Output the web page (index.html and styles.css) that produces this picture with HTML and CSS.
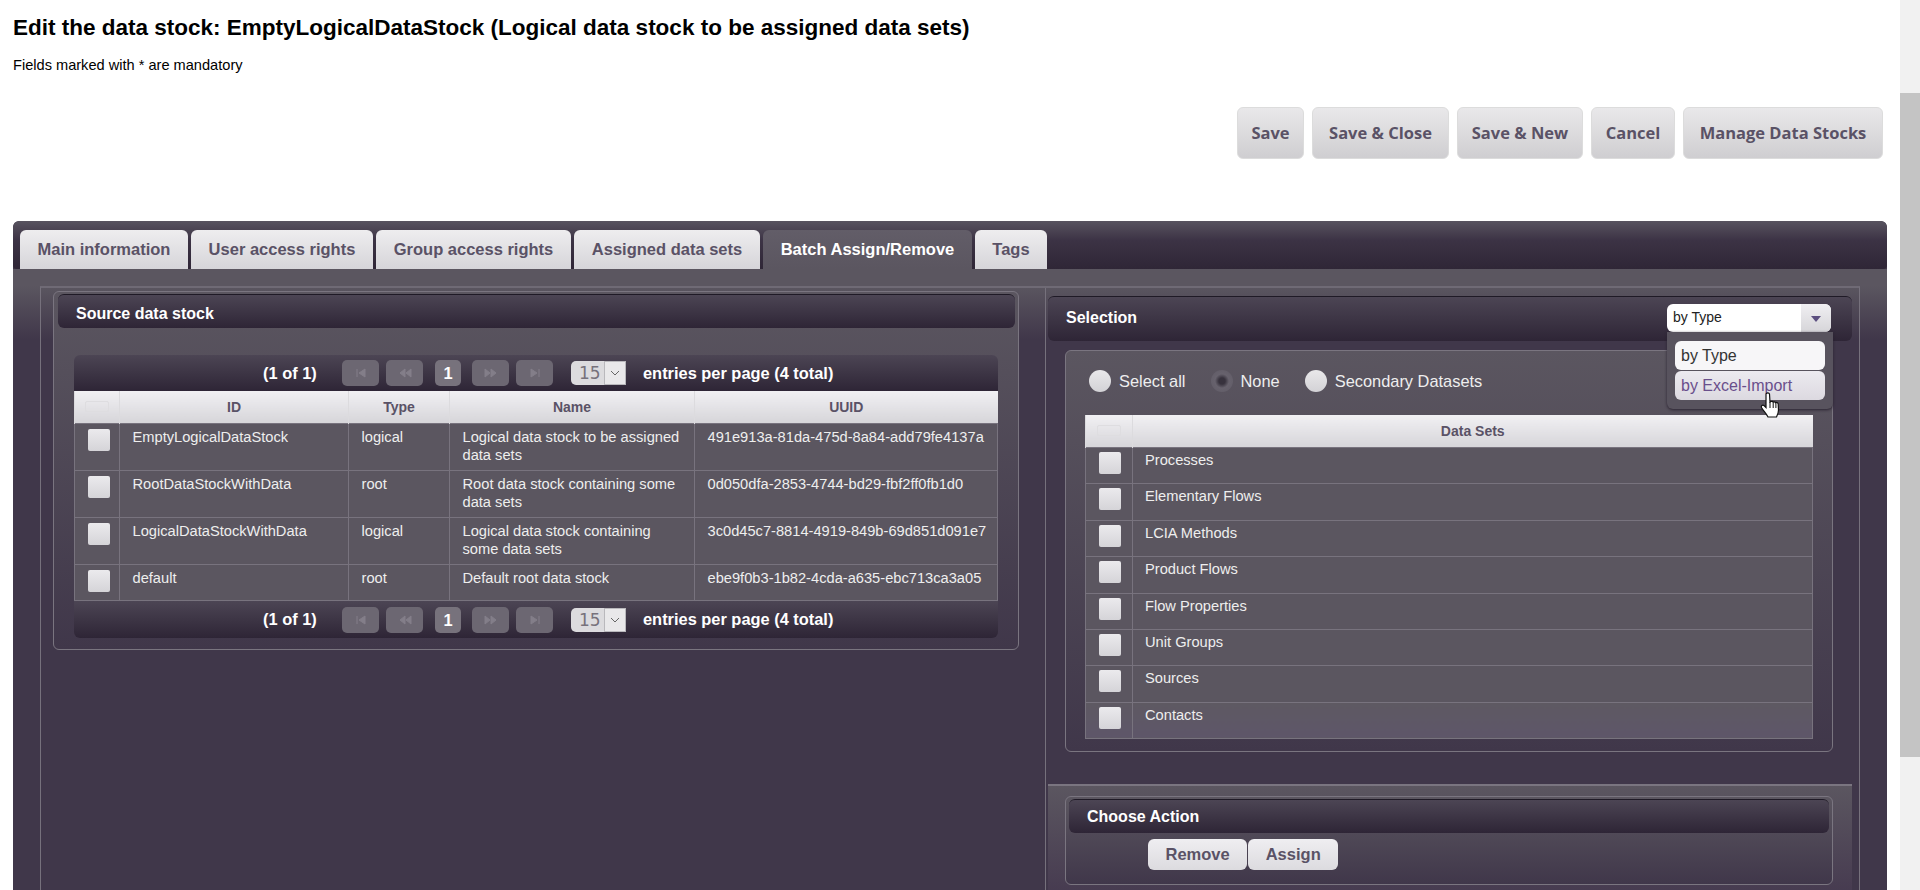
FILE: index.html
```html
<!DOCTYPE html>
<html lang="en">
<head>
    <meta charset="UTF-8">
    <title>Edit the data stock</title>
    <link rel="stylesheet" href="styles.css">
</head>
<body>
    <main class="page">
        <h1>Edit the data stock: EmptyLogicalDataStock (Logical data stock to be assigned data sets)</h1>
        <p class="note">Fields marked with * are mandatory</p>

        <div class="toolbar">
            <button class="btn b-save">Save</button>
            <button class="btn b-close">Save &amp; Close</button>
            <button class="btn b-new">Save &amp; New</button>
            <button class="btn b-cancel">Cancel</button>
            <button class="btn b-manage">Manage Data Stocks</button>
        </div>

        <section class="panel">
            <nav class="tabs">
                <a class="tab w1">Main information</a>
                <a class="tab w2">User access rights</a>
                <a class="tab w3">Group access rights</a>
                <a class="tab w4">Assigned data sets</a>
                <a class="tab w5 active">Batch Assign/Remove</a>
                <a class="tab w6">Tags</a>
            </nav>

            <div class="tab-body">
                <div class="columns">
                    <!-- Source data stock -->
                    <div class="col-left">
                        <div class="box source-box">
                            <div class="bar">Source data stock</div>
                            <div class="source-inner">
                                <div class="pager pager-top">
                                    <span class="pager-count">(1 of 1)</span>
                                    <span class="pg"><svg width="12" height="10" viewBox="0 0 12 10"><path d="M2 1v8M10 1v8L4 5z"/></svg></span>
                                    <span class="pg"><svg width="14" height="10" viewBox="0 0 14 10"><path d="M7 1v8L2 5zM13 1v8L8 5z"/></svg></span>
                                    <span class="pg-num">1</span>
                                    <span class="pg"><svg width="14" height="10" viewBox="0 0 14 10"><path d="M1 1v8l5-4zM7 1v8l5-4z"/></svg></span>
                                    <span class="pg"><svg width="12" height="10" viewBox="0 0 12 10"><path d="M2 1v8l6-4zM10 1v8"/></svg></span>
                                    <span class="per-page">15<i class="per-arrow"><svg width="10" height="6" viewBox="0 0 10 6"><path d="M1 1l4 4 4-4"/></svg></i></span>
                                    <span class="pager-total">entries per page (4 total)</span>
                                </div>
                                <table class="grid stocks">
                                    <thead>
                                        <tr>
                                            <th class="c-check"><span class="check-ghost"></span></th>
                                            <th class="c-id">ID</th>
                                            <th class="c-type">Type</th>
                                            <th class="c-name">Name</th>
                                            <th>UUID</th>
                                        </tr>
                                    </thead>
                                    <tbody>
                                        <tr>
                                            <td class="c-check"><span class="check"></span></td>
                                            <td>EmptyLogicalDataStock</td>
                                            <td>logical</td>
                                            <td>Logical data stock to be assigned data sets</td>
                                            <td>491e913a-81da-475d-8a84-add79fe4137a</td>
                                        </tr>
                                        <tr>
                                            <td class="c-check"><span class="check"></span></td>
                                            <td>RootDataStockWithData</td>
                                            <td>root</td>
                                            <td>Root data stock containing some data sets</td>
                                            <td>0d050dfa-2853-4744-bd29-fbf2ff0fb1d0</td>
                                        </tr>
                                        <tr>
                                            <td class="c-check"><span class="check"></span></td>
                                            <td>LogicalDataStockWithData</td>
                                            <td>logical</td>
                                            <td>Logical data stock containing some data sets</td>
                                            <td>3c0d45c7-8814-4919-849b-69d851d091e7</td>
                                        </tr>
                                        <tr class="short">
                                            <td class="c-check"><span class="check"></span></td>
                                            <td>default</td>
                                            <td>root</td>
                                            <td>Default root data stock</td>
                                            <td>ebe9f0b3-1b82-4cda-a635-ebc713ca3a05</td>
                                        </tr>
                                    </tbody>
                                </table>
                                <div class="pager pager-bottom">
                                    <span class="pager-count">(1 of 1)</span>
                                    <span class="pg"><svg width="12" height="10" viewBox="0 0 12 10"><path d="M2 1v8M10 1v8L4 5z"/></svg></span>
                                    <span class="pg"><svg width="14" height="10" viewBox="0 0 14 10"><path d="M7 1v8L2 5zM13 1v8L8 5z"/></svg></span>
                                    <span class="pg-num">1</span>
                                    <span class="pg"><svg width="14" height="10" viewBox="0 0 14 10"><path d="M1 1v8l5-4zM7 1v8l5-4z"/></svg></span>
                                    <span class="pg"><svg width="12" height="10" viewBox="0 0 12 10"><path d="M2 1v8l6-4zM10 1v8"/></svg></span>
                                    <span class="per-page">15<i class="per-arrow"><svg width="10" height="6" viewBox="0 0 10 6"><path d="M1 1l4 4 4-4"/></svg></i></span>
                                    <span class="pager-total">entries per page (4 total)</span>
                                </div>
                            </div>
                        </div>
                    </div>

                    <!-- Selection and action -->
                    <div class="col-right">
                        <div class="bar bar-selection">
                            <span>Selection</span>
                            <div class="combo">
                                <span class="combo-label">by Type</span>
                                <span class="combo-arrow"></span>
                                <div class="combo-menu">
                                    <div class="combo-item">by Type</div>
                                    <div class="combo-item hover">by Excel-Import</div>
                                    <svg class="hand" width="22" height="28" viewBox="0 0 22 28">
                                        <path d="M6 2c1-1.500 3-1.500 3.500 0l.5 8 1-.5c1-.5 2 0 2.200.5 1-.5 2 0 2.200.6 1-.4 2.600 0 2.800 1.400l.3 6c0 3-1 5-2 7H8c-1-2-5-7-6.500-9.500-.8-1.500 1-3 2.500-2l2 2z" fill="#fff" stroke="#111" stroke-width="1.200"/>
                                        <path d="M10 10v6M13.200 10v6M15.900 11v5" stroke="#111" stroke-width="1" fill="none"/>
                                    </svg>
                                </div>
                            </div>
                        </div>

                        <div class="box data-box">
                            <div class="radios">
                                <label class="radio-item"><span class="radio"></span>Select all</label>
                                <label class="radio-item"><span class="radio on"></span>None</label>
                                <label class="radio-item"><span class="radio"></span>Secondary Datasets</label>
                            </div>
                            <table class="grid sets">
                                <thead>
                                    <tr>
                                        <th class="c-check2"><span class="check-ghost"></span></th>
                                        <th>Data Sets</th>
                                    </tr>
                                </thead>
                                <tbody>
                                    <tr><td class="c-check2"><span class="check"></span></td><td>Processes</td></tr>
                                    <tr><td class="c-check2"><span class="check"></span></td><td>Elementary Flows</td></tr>
                                    <tr><td class="c-check2"><span class="check"></span></td><td>LCIA Methods</td></tr>
                                    <tr><td class="c-check2"><span class="check"></span></td><td>Product Flows</td></tr>
                                    <tr><td class="c-check2"><span class="check"></span></td><td>Flow Properties</td></tr>
                                    <tr><td class="c-check2"><span class="check"></span></td><td>Unit Groups</td></tr>
                                    <tr><td class="c-check2"><span class="check"></span></td><td>Sources</td></tr>
                                    <tr><td class="c-check2"><span class="check"></span></td><td>Contacts</td></tr>
                                </tbody>
                            </table>
                        </div>

                        <div class="action-area">
                            <div class="box action-box">
                                <div class="bar bar-action">Choose Action</div>
                                <div class="action-buttons">
                                    <button class="small-btn">Remove</button>
                                    <button class="small-btn">Assign</button>
                                </div>
                            </div>
                        </div>
                    </div>
                </div>
            </div>
        </section>
    </main>

    <div class="scrollbar">
        <div class="scroll-thumb"></div>
    </div>
</body>
</html>
```

FILE: styles.css
```css
html, body {
    margin: 0;
    height: 890px;
    overflow: hidden;
}
body {
    display: flex;
    background: #fff;
    font-family: "Liberation Sans", Arial, sans-serif;
    color: #000;
}
.page {
    flex: 1;
    min-width: 0;
    padding: 0 13px;
}
h1 {
    margin: 0;
    padding-top: 15px;
    font-size: 22.500px;
    line-height: 26px;
    font-weight: bold;
}
.note {
    margin: 15px 0 0;
    font-size: 14.600px;
    line-height: 18px;
}

/* Top buttons */
.toolbar {
    display: flex;
    justify-content: flex-end;
    gap: 8px;
    margin-top: 33px;
    padding-right: 4px;
}
.btn {
    height: 52px;
    padding: 0 0 2px;
    border: 1px solid #dcdcdc;
    border-radius: 6px;
    background: linear-gradient(#e9e8ea, #cfced1);
    font-family: "Open Sans", sans-serif;
    font-size: 16.500px;
    font-weight: bold;
    color: #5a5266;
}
.b-save { width: 67px; }
.b-close { width: 137px; }
.b-new { width: 126px; }
.b-cancel { width: 84px; }
.b-manage { width: 200px; }

/* Tab panel */
.panel {
    margin-top: 62px;
    height: 700px;
    border-radius: 6px 6px 0 0;
    background: #3f3648;
    overflow: hidden;
}
.tabs {
    display: flex;
    gap: 3px;
    height: 39px;
    padding: 9px 0 0 7px;
    border-radius: 6px 6px 4px 4px;
    background: linear-gradient(#58535f, #3c3345 40%, #2f2636);
}
.tab {
    box-sizing: border-box;
    height: 39px;
    text-align: center;
    border-radius: 6px 6px 0 0;
    background: linear-gradient(#eeedef, #d6d5d9);
    font-size: 16.500px;
    font-weight: bold;
    line-height: 39px;
    color: #5a5266;
}
.w1 { width: 168px; }
.w2 { width: 182px; }
.w3 { width: 195px; }
.w4 { width: 186px; }
.w5 { width: 209px; }
.w6 { width: 72px; }
.tab.active {
    background: linear-gradient(#625d68, #5b5660);
    color: #fff;
}
.tab-body {
    padding: 17px 27px 0;
    background: linear-gradient(#5b5660, #5b5660 17px, #40374a 70px);
}
.columns {
    display: flex;
    height: 640px;
    border-top: 2px solid #6f6a75;
    border-left: 1px solid #76717c;
    border-right: 1px solid #76717c;
}

/* Boxes and dark title bars */
.box {
    box-sizing: border-box;
    border: 1px solid #7a7580;
    border-radius: 6px;
    background: linear-gradient(#5b5660, #40374a);
}
.bar {
    box-sizing: border-box;
    border-top: 1px solid #1f1a26;
    border-radius: 6px;
    background: linear-gradient(#4c4554, #2e2536);
    font-size: 16px;
    font-weight: bold;
    color: #fff;
}

/* Left column */
.col-left {
    box-sizing: border-box;
    width: 1005px;
    padding: 3px 0 0 12px;
    border-right: 1px solid #76717c;
}
.source-box {
    width: 966px;
    height: 359px;
    padding: 2px 3px 0 4px;
}
.source-box > .bar {
    height: 34px;
    padding-left: 18px;
    line-height: 37px;
}
.source-inner {
    margin: 27px 17px 0 16px;
}
.pager {
    display: flex;
    align-items: center;
    box-sizing: border-box;
    height: 36px;
    padding-left: 189px;
    background: linear-gradient(#4c4554, #2e2536);
    font-size: 16.400px;
    font-weight: bold;
    color: #fff;
}
.pager-top {
    border-radius: 6px 6px 0 0;
}
.pager-bottom {
    height: 37px;
    border-radius: 0 0 6px 6px;
}
.pager-count {
    width: 79px;
}
.pg {
    display: flex;
    align-items: center;
    justify-content: center;
    width: 37px;
    height: 26px;
    margin-right: 7px;
    border-radius: 5px;
    background: #6c6772;
}
.pg svg path {
    fill: #837e89;
    stroke: #837e89;
}
.pg-num {
    width: 26px;
    height: 26px;
    margin: 0 11px 0 5px;
    border-radius: 5px;
    background: #77727c;
    text-align: center;
    line-height: 26px;
}
.per-page {
    display: flex;
    align-items: center;
    justify-content: space-between;
    box-sizing: border-box;
    width: 55px;
    height: 24px;
    margin-left: 11px;
    padding-left: 8px;
    border-radius: 5px 0 0 5px;
    background: #dcdbde;
    font-family: "DejaVu Sans", sans-serif;
    font-size: 17px;
    font-weight: normal;
    color: #77727c;
}
.per-arrow {
    display: flex;
    align-items: center;
    justify-content: center;
    width: 20px;
    height: 22px;
    background: #e9e8ea;
    border: 1px solid #b9b8bc;
}
.per-arrow svg path {
    fill: none;
    stroke: #666;
}
.pager-total {
    margin-left: 17px;
}

/* Tables */
.grid {
    width: 100%;
    border-collapse: collapse;
    table-layout: fixed;
    font-size: 14.670px;
    line-height: 18px;
    color: #eee;
}
.grid th {
    height: 32px;
    padding: 0;
    border-left: 1px solid #dcdbde;
    background: linear-gradient(#f1f0f3, #d6d5d9);
    font-size: 14px;
    font-weight: bold;
    color: #5a5266;
}
.grid td {
    box-sizing: border-box;
    padding: 4px 13px 0 12.500px;
    border: 1px solid #78737e;
    background: #5b5660;
    vertical-align: top;
}
.stocks td:last-child {
    padding-right: 0;
}
.stocks tbody tr {
    height: 47px;
}
.stocks tbody tr.short {
    height: 36px;
}
.c-check { width: 44px; }
.c-id { width: 228px; }
.c-type { width: 100px; }
.c-name { width: 244px; }
.grid td.c-check {
    padding: 5px 0 0 3px;
    text-align: center;
}
.grid td.c-check2 {
    padding: 4px 0 0 2px;
    text-align: center;
}
.check {
    display: inline-block;
    width: 22px;
    height: 22px;
    border-radius: 2px;
    background: linear-gradient(#ebeaed, #d5d4d8);
    vertical-align: top;
}
.check-ghost {
    display: inline-block;
    width: 22px;
    height: 9px;
    border: 1px solid #dedde0;
    border-radius: 2px;
}

/* Right column */
.col-right {
    flex: 1;
    min-width: 0;
    padding: 8px 7px 0 2px;
}
.bar-selection {
    display: flex;
    align-items: center;
    justify-content: space-between;
    height: 45px;
    padding: 0 21px 3px 18px;
}
.combo {
    display: flex;
    position: relative;
    width: 164px;
    height: 28px;
    border-radius: 6px;
    background: #fff;
    font-size: 14px;
    font-weight: normal;
    color: #222;
}
.combo-label {
    flex: 1;
    padding-left: 6px;
    line-height: 27px;
}
.combo-arrow {
    position: relative;
    width: 30px;
    border-radius: 0 6px 6px 0;
    background: linear-gradient(#f0eff2, #d6d5d9);
}
.combo-arrow::after {
    content: "";
    position: absolute;
    left: 10px;
    top: 12px;
    border-left: 5px solid transparent;
    border-right: 5px solid transparent;
    border-top: 6px solid #5c4f80;
}
.combo-menu {
    position: absolute;
    top: 28px;
    left: 0;
    box-sizing: border-box;
    width: 166px;
    height: 77px;
    padding: 9px 8px 0;
    border-radius: 0 0 6px 6px;
    background: #58535e;
    box-shadow: 0 1px 3px #2a2230;
    font-size: 16px;
}
.combo-item {
    box-sizing: border-box;
    height: 29px;
    margin-bottom: 1px;
    padding-left: 6px;
    border-radius: 6px;
    background: #f7f6f8;
    line-height: 29px;
    color: #333;
}
.combo-item.hover {
    background: linear-gradient(#eceaf0, #dcd9e0);
    color: #6a4f8c;
}
.hand {
    position: absolute;
    left: 93px;
    top: 60px;
}
.data-box {
    box-sizing: border-box;
    width: 768px;
    height: 402px;
    margin: 9px 0 0 17px;
}
.radios {
    display: flex;
    align-items: center;
    height: 60px;
    padding: 0 0 4px 23px;
    font-size: 16.400px;
    color: #eee;
}
.radio-item {
    display: flex;
    align-items: center;
    gap: 8px;
    margin-right: 25px;
}
.radio {
    box-sizing: border-box;
    width: 22px;
    height: 22px;
    border-radius: 50%;
    background: linear-gradient(#e9e8ea, #d3d2d6);
}
.radio.on {
    background: radial-gradient(#37323d 20%, #67626d 45%, #5f5a65);
}
.sets {
    width: 728px;
    margin-left: 19px;
}
.sets tbody tr {
    height: 36.400px;
}
.sets tbody tr:last-child td {
    background: linear-gradient(#5e5962, #5e5669);
}
.c-check2 { width: 46px; }
.sets td {
    padding-top: 3px;
}
.sets td:last-child {
    padding-left: 12px;
}
.action-area {
    height: 105px;
    margin-top: 32px;
    padding-top: 10px;
    border-top: 2px solid #7a7580;
    background: linear-gradient(#5b5660, #45394f);
}
.action-box {
    width: 768px;
    height: 89px;
    margin-left: 17px;
    padding: 2px 3px 0;
}
.bar-action {
    height: 34px;
    padding-left: 18px;
    line-height: 33px;
}
.action-buttons {
    display: flex;
    gap: 1px;
    margin-top: 6px;
    padding-left: 79px;
}
.small-btn {
    height: 31px;
    padding: 0 17.500px;
    border: 0;
    border-radius: 6px;
    background: linear-gradient(#efeef1, #dcdbdf);
    font-family: "Liberation Sans", Arial, sans-serif;
    font-size: 16.500px;
    font-weight: bold;
    color: #5a5266;
}

/* Window scrollbar */
.scrollbar {
    width: 20px;
    height: 890px;
    background: #f1f1f1;
}
.scroll-thumb {
    height: 664px;
    margin-top: 93px;
    background: #c4c4c4;
}
```
